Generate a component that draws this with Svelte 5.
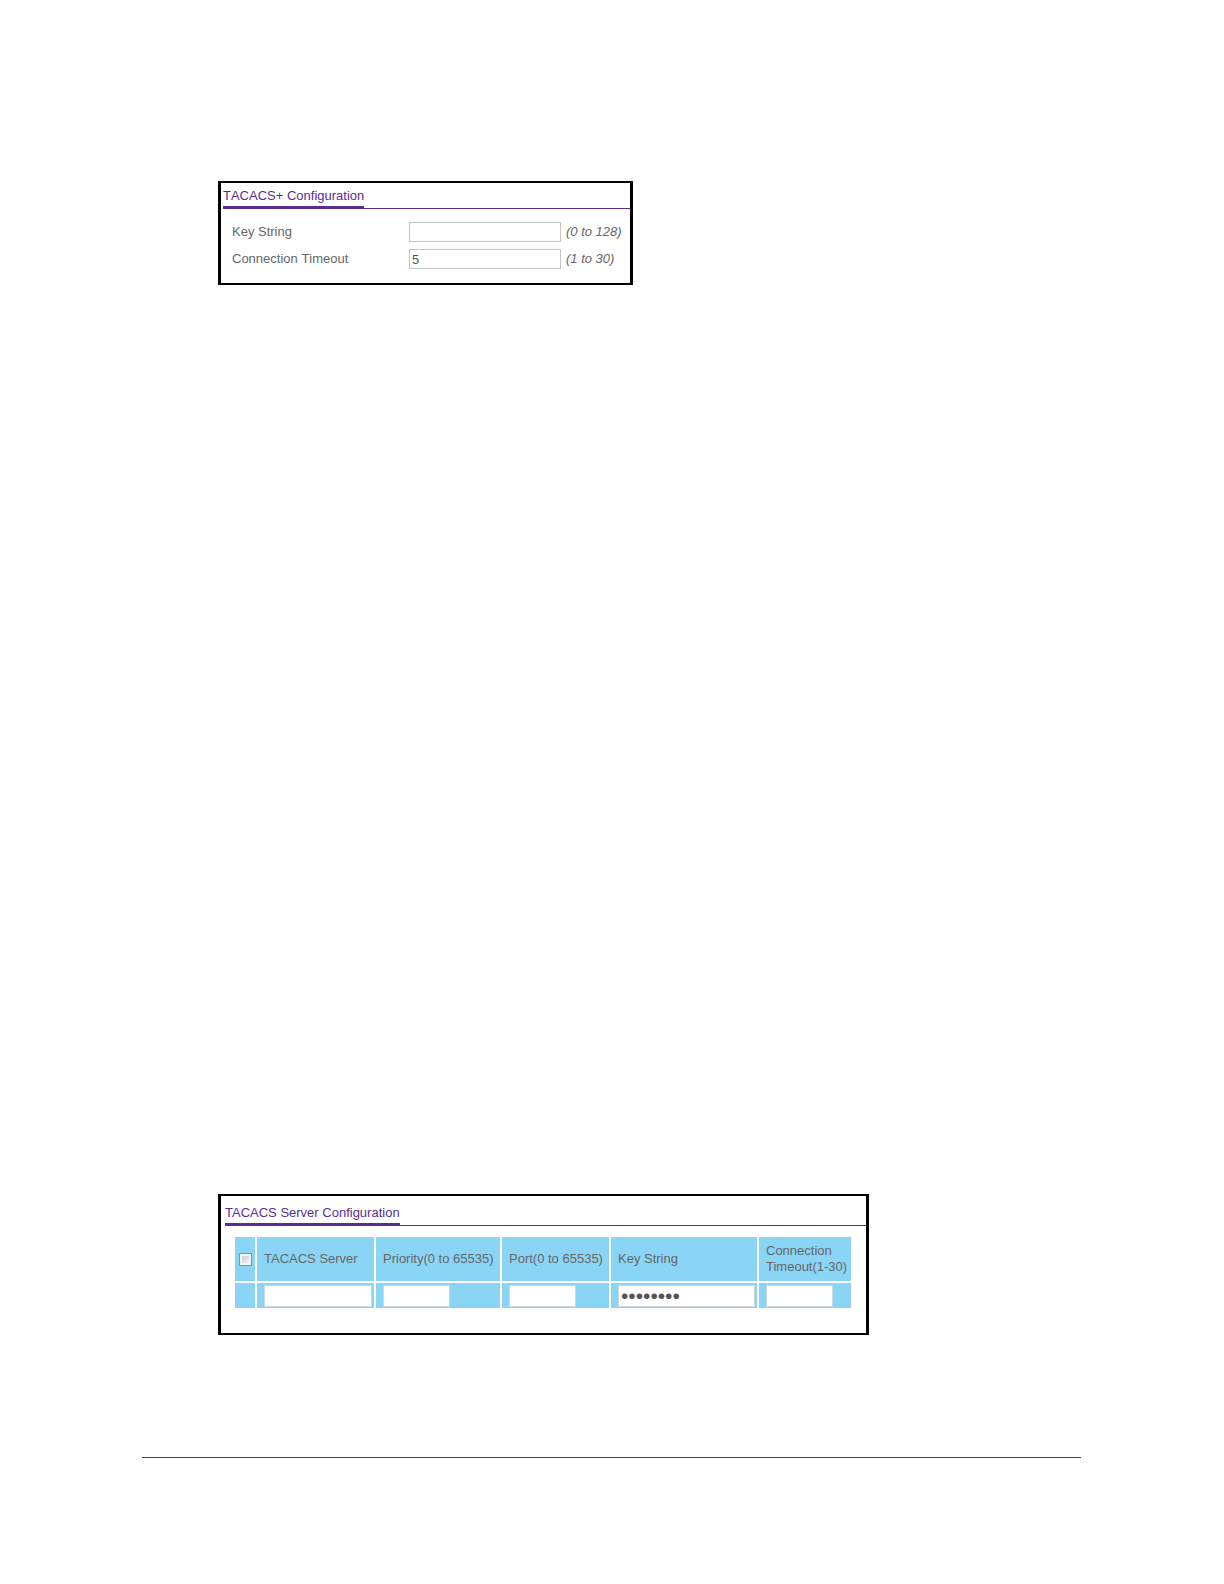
<script lang="ts">
  let keyString = $state('');
  let timeout = $state('5');

  let allSelected = $state(false);
  let server = $state({ host: '', priority: '', port: '', key: 'password', timeout: '' });
</script>

<main class="page">
  <section class="panel global-panel">
    <h2 class="panel-title"><span>TACACS+ Configuration</span></h2>
    <form class="fields">
      <label for="key-string">Key String</label>
      <input id="key-string" type="text" bind:value={keyString} />
      <em>(0 to 128)</em>

      <label for="timeout">Connection Timeout</label>
      <input id="timeout" type="text" bind:value={timeout} />
      <em>(1 to 30)</em>
    </form>
  </section>

  <section class="panel server-panel">
    <h2 class="panel-title"><span>TACACS Server Configuration</span></h2>
    <table class="servers">
      <colgroup>
        <col class="col-check" />
        <col class="col-host" />
        <col class="col-priority" />
        <col class="col-port" />
        <col class="col-key" />
        <col class="col-timeout" />
      </colgroup>
      <thead>
        <tr>
          <th class="check">
            <input type="checkbox" aria-label="Select all" bind:checked={allSelected} />
          </th>
          <th id="host">TACACS Server</th>
          <th id="priority">Priority(0 to 65535)</th>
          <th id="port">Port(0 to 65535)</th>
          <th id="key">Key String</th>
          <th id="conn">Connection Timeout(1-30)</th>
        </tr>
      </thead>
      <tbody>
        <tr>
          <td></td>
          <td><input class="wide" type="text" aria-labelledby="host" bind:value={server.host} /></td>
          <td><input type="text" aria-labelledby="priority" bind:value={server.priority} /></td>
          <td><input type="text" aria-labelledby="port" bind:value={server.port} /></td>
          <td><input class="wide secret" type="password" aria-labelledby="key" bind:value={server.key} /></td>
          <td><input type="text" aria-labelledby="conn" bind:value={server.timeout} /></td>
        </tr>
      </tbody>
    </table>
  </section>

  <hr class="page-rule" />
</main>

<style>
  :global(body) {
    background: #fff;
  }

  .page {
    display: flex;
    flex-direction: column;
    align-items: flex-start;
    padding: 181px 143px 126px 142px;
    font-family: 'Liberation Sans', Arial, sans-serif;
    font-size: 13px;
    line-height: 16px;
    color: #666;
  }

  .panel {
    box-sizing: border-box;
    max-width: 100%;
    margin-left: 76px;
    border: solid #000;
    border-width: 2px 3px;
  }

  .global-panel {
    width: 415px;
    padding: 3px 0 14px 2px;
    font-kerning: none;
  }

  .server-panel {
    width: 651px;
    margin-top: 909px;
    padding: 7px 0 23px 4px;
  }

  .panel-title {
    display: flex;
    margin: 0;
    border-bottom: 1px solid #5c2d91;
    font-size: 13px;
    font-weight: normal;
    line-height: 20px;
    color: #5c2d91;
  }

  /* the tab marker overlaps the thin rule under the title */
  .panel-title span {
    margin-bottom: -1px;
    border-bottom: 3px solid #5c2d91;
  }

  .fields {
    display: grid;
    grid-template-columns: 172px 152px auto;
    gap: 7px 5px;
    align-items: center;
    padding: 13px 0 0 9px;
  }

  input {
    box-sizing: border-box;
    margin: 0;
    font: inherit;
    color: #555;
    background: #fff;
    border: 1px solid #c4c4c4;
    border-radius: 0;
  }

  .fields input {
    width: 100%;
    height: 20px;
    padding: 0 2px;
  }

  .servers {
    width: 620px;
    margin: 9px 0 0 8px;
    table-layout: fixed;
    border-collapse: separate;
    border-spacing: 2px;
  }

  .col-check {
    width: 20px;
  }

  .col-host {
    width: 117px;
  }

  .col-priority {
    width: 124px;
  }

  .col-port {
    width: 107px;
  }

  .col-key {
    width: 146px;
  }

  .col-timeout {
    width: 92px;
  }

  th,
  td {
    padding: 0 2px 0 7px;
    background: #8ad5f5;
  }

  th {
    height: 44px;
    font-weight: normal;
    text-align: left;
  }

  td {
    height: 25px;
  }

  .servers td input {
    display: block;
    width: 67px;
    height: 22px;
    padding: 0 2px;
    border-color: #ccd9e0;
  }

  .servers td .wide {
    width: 100%;
  }

  .servers td .secret {
    font-size: 21px;
    line-height: 20px;
  }

  .servers .check {
    padding: 0 4px;
  }

  .check input {
    display: block;
    appearance: none;
    width: 13px;
    height: 13px;
    border-color: #8e8f8f;
    background: linear-gradient(135deg, #c6ccd1, #f6f6f6);
    box-shadow: inset 0 0 0 2px #f4f4f4;
  }

  .check input:checked {
    background: #4b5f83;
  }

  .page-rule {
    align-self: stretch;
    height: 1px;
    margin: 122px 0 0;
    border: 0;
    background: #5c2d78;
  }
</style>
